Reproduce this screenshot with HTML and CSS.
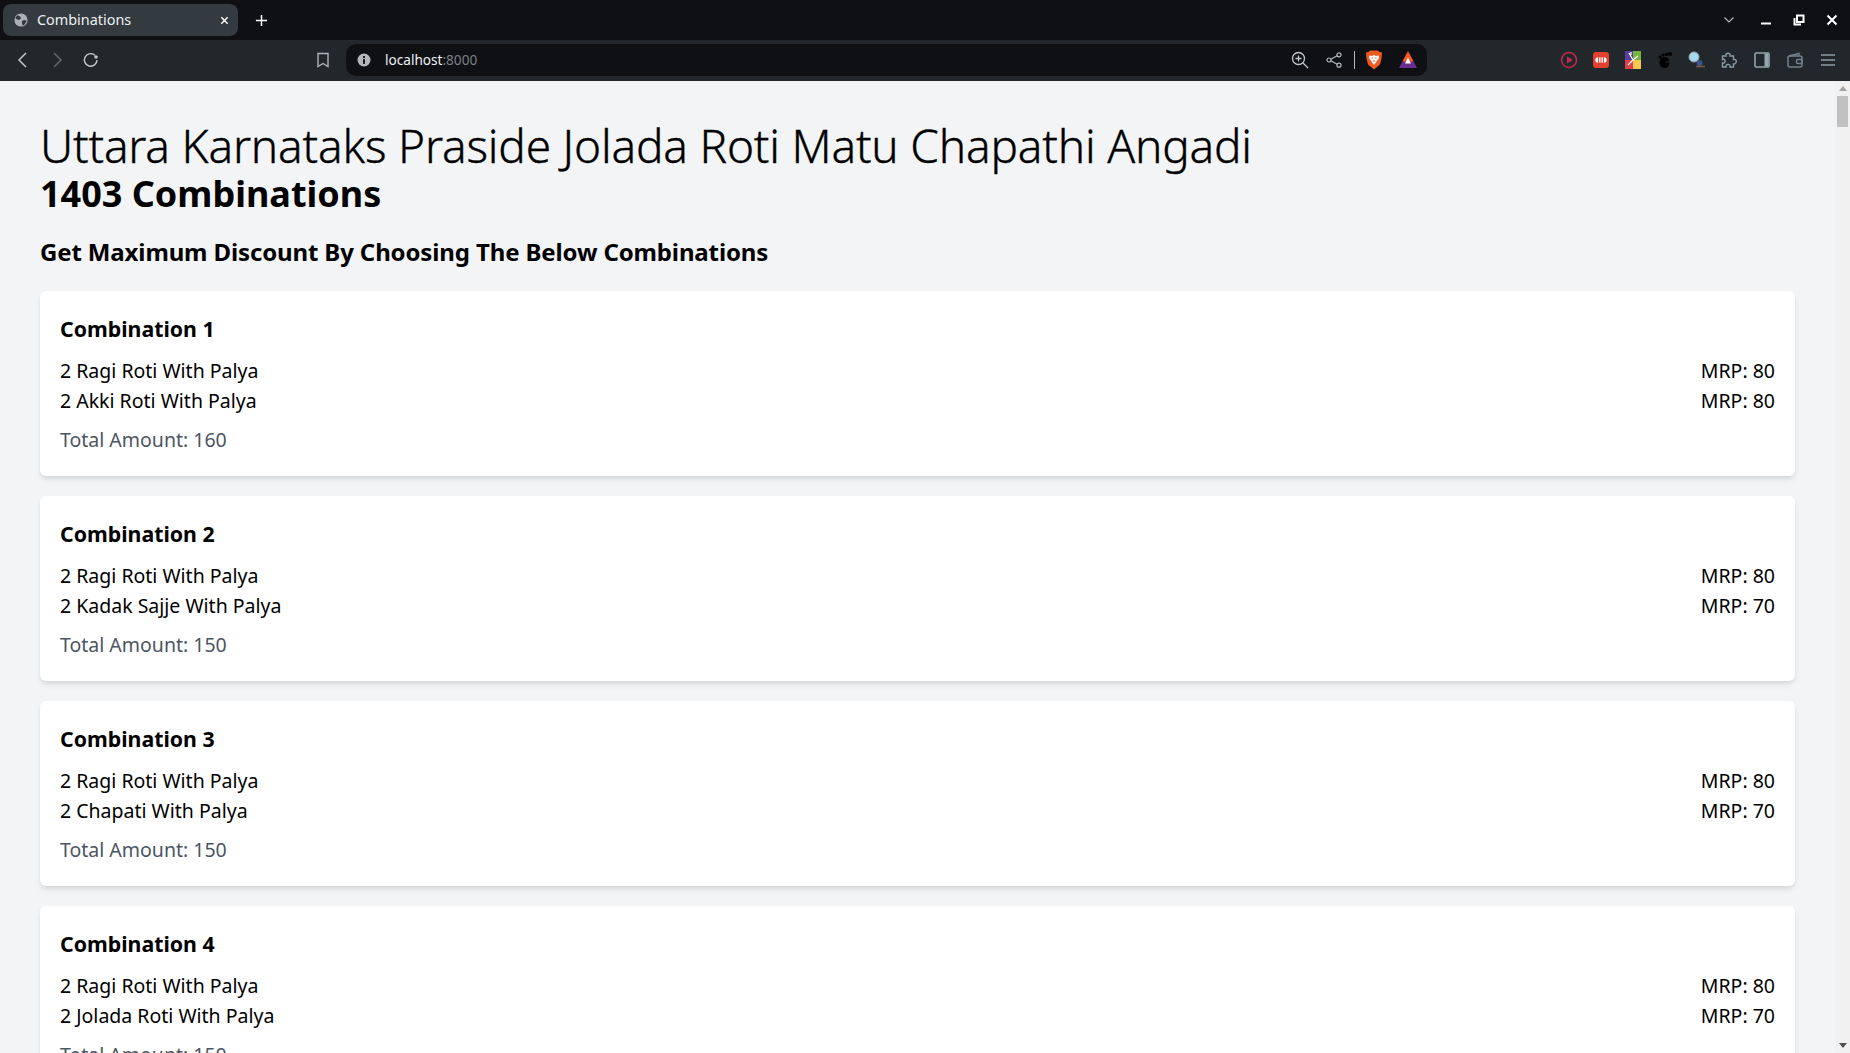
FILE: index.html
```html
<!DOCTYPE html>
<html lang="en">
<head>
<meta charset="utf-8">
<title>Combinations</title>
<link rel="stylesheet" href="styles.css">
</head>
<body>
<div class="window">
  <header class="tabbar">
    <div class="tab">
      <svg class="ico16" viewBox="0 0 16 16"><circle cx="8" cy="8" r="7.500" fill="#aab0b5"/><path d="M4 2.500l3 1.500 1 2-2 2-3-1-1.500-2zM9 9l3-1 2.500 1-2.500 4-2 1.500-1-3z" fill="#333a40"/></svg>
      <span class="tab-title">Combinations</span>
      <svg class="ico10" viewBox="0 0 10 10"><path d="M1.500 1.500l7 7M8.500 1.500l-7 7" stroke="#fff" stroke-width="1.600"/></svg>
    </div>
    <svg class="newtab" viewBox="0 0 14 14"><path d="M7 1v12M1 7h12" stroke="#fff" stroke-width="1.600"/></svg>
    <div class="spacer"></div>
    <svg class="winbtn winchev" viewBox="0 0 12 12"><path d="M1.500 3.500L6 8l4.500-4.500" fill="none" stroke="#aeb4b9" stroke-width="1.200"/></svg>
    <svg class="winbtn" viewBox="0 0 12 12"><path d="M1 9.500h10" stroke="#fff" stroke-width="2"/></svg>
    <svg class="winbtn" viewBox="0 0 12 12"><path d="M4 1.500h6.500V8H4zM1.500 4v6.500H8" fill="none" stroke="#fff" stroke-width="2"/></svg>
    <svg class="winbtn" viewBox="0 0 12 12"><path d="M1.500 1.500l9 9M10.500 1.500l-9 9" stroke="#fff" stroke-width="2"/></svg>
  </header>
  <nav class="toolbar">
    <svg class="navbtn" viewBox="0 0 18 18"><path d="M12 2L5 9l7 7" fill="none" stroke="#c4c8cb" stroke-width="1.500"/></svg>
    <svg class="navbtn" viewBox="0 0 18 18"><path d="M6 2l7 7-7 7" fill="none" stroke="#62676b" stroke-width="1.500"/></svg>
    <svg class="navbtn" viewBox="0 0 18 18"><path d="M15 9a6.300 6.300 0 1 1-2-4.700" fill="none" stroke="#c4c8cb" stroke-width="1.400"/><circle cx="14" cy="6" r="1.800" fill="#c4c8cb"/></svg>
    <svg class="bookmark" viewBox="0 0 14 16"><path d="M2 1.500h10v13l-5-3-5 3z" fill="none" stroke="#aeb4b9" stroke-width="1.400"/></svg>
    <div class="urlbar">
      <svg class="ico14" viewBox="0 0 14 14"><circle cx="7" cy="7" r="6.500" fill="#b3b8bc"/><path d="M7 3v2M7 6v5" stroke="#0e1014" stroke-width="1.800"/></svg>
      <span class="url">localhost<span class="url-port">:8000</span></span>
      <span class="spacer"></span>
      <svg class="urlicon" viewBox="0 0 18 18"><circle cx="7.500" cy="7.500" r="6" fill="none" stroke="#c4c8cb" stroke-width="1.300"/><path d="M12 12l5 5M7.500 4.500v6M4.500 7.500h6" stroke="#c4c8cb" stroke-width="1.300"/></svg>
      <svg class="urlicon" viewBox="0 0 18 18"><path d="M13.500 4L4.500 9l9 5" fill="none" stroke="#b3b8bc" stroke-width="1.200"/><circle cx="14" cy="3.800" r="2" fill="#0e1014" stroke="#b3b8bc" stroke-width="1.200"/><circle cx="4" cy="9" r="2" fill="#0e1014" stroke="#b3b8bc" stroke-width="1.200"/><circle cx="14" cy="14.200" r="2" fill="#0e1014" stroke="#b3b8bc" stroke-width="1.200"/></svg>
      <span class="urlsep"></span>
      <svg class="urlicon brave" viewBox="0 0 18 20"><path d="M5 .5h8l1.500 1.500L17 2.500l-.5 6-1.500 6-6 5-6-5-1.500-6-.5-6L3.500 2z" fill="#f15a1f"/><path d="M4.500 5.500l2.500.5L9 5l2 1 2.500-.5.500 2.500-2.500 3.500-2 3h-1l-2-3L4 8z" fill="#fff"/><path d="M6.500 8h1.500M10 8h1.500M8 11h2" stroke="#f15a1f"/></svg>
      <svg class="urlicon" viewBox="0 0 18 18"><path d="M9 0l9 17H0z" fill="#6a2c8e"/><path d="M9 0l5.500 10.500h-11z" fill="#f15a1f"/><path d="M9 6.500l3 6H6z" fill="#fff"/></svg>
    </div>
    <div class="spacer"></div>
    <div class="exts">
      <svg class="ext" viewBox="0 0 18 18"><circle cx="9" cy="9" r="7.500" fill="none" stroke="#c8264f" stroke-width="1.500"/><path d="M7 5.500l6 3.500-6 3.500z" fill="#c8264f"/></svg>
      <svg class="ext" viewBox="0 0 18 18"><rect x="1" y="1" width="16" height="16" rx="3" fill="#e4402f"/><rect x="3.500" y="6.500" width="11" height="5" rx="1.500" fill="#fff"/><path d="M6.500 6.500v5M9 6.500v5M11.500 6.500v5" stroke="#e4402f"/></svg>
      <svg class="ext" viewBox="0 0 18 18"><rect x="1" y="0" width="8" height="9" fill="#5b3f9e"/><rect x="9" y="0" width="8" height="9" fill="#74b63e"/><rect x="1" y="9" width="8" height="9" fill="#e2404a"/><rect x="9" y="9" width="8" height="9" fill="#f5c950"/><path d="M9 9L5 2M9 9l5-4M9 9l-5 5M7 4V1" stroke="#fff" stroke-width="1.200"/></svg>
      <svg class="ext" viewBox="0 0 18 18"><ellipse cx="8.500" cy="11.500" rx="5" ry="5.500" fill="#000"/><circle cx="4" cy="6" r="1.500" fill="#000"/><circle cx="7" cy="4" r="1.500" fill="#000"/><circle cx="10.500" cy="3.500" r="1.700" fill="#000"/><circle cx="14" cy="3" r="2" fill="#000"/><path d="M10 11h5" stroke="#22272b" stroke-width="1.500"/></svg>
      <svg class="ext" viewBox="0 0 18 18"><circle cx="6" cy="6" r="5" fill="#a9d8ee" stroke="#8fa2ae"/><circle cx="11.500" cy="12" r="3" fill="#3d5488"/><path d="M8 15.500h9" stroke="#7a5a48" stroke-width="1.500"/></svg>
      <svg class="ext" viewBox="0 0 18 18"><path d="M7 2.500c2-1 3.500.5 3 2.500h3.500v3.500c2-.5 3.500 1 2.500 3s-2.500 1.500-2.500 1.500V16H10c.5-2-1-3-2.500-2.500S5.500 15 6 16H2.500v-4c2 .5 3-1 2.500-2.500S3 8 2.500 8.500V5H6c-.5-1 0-2 1-2.500z" fill="none" stroke="#8a9aa3" stroke-width="1.400"/></svg>
      <svg class="ext" viewBox="0 0 18 18"><rect x="2" y="2" width="14" height="14" rx="1" fill="none" stroke="#95a6b0" stroke-width="1.500"/><rect x="11.500" y="2.500" width="4" height="13" fill="#95a6b0"/></svg>
      <svg class="ext" viewBox="0 0 18 18"><path d="M3 5l10-2.500V5" fill="none" stroke="#72828b" stroke-width="1.400"/><rect x="2" y="5" width="14" height="11" rx="2" fill="none" stroke="#72828b" stroke-width="1.500"/><rect x="10.500" y="8.500" width="5.500" height="4" rx="1" fill="none" stroke="#72828b" stroke-width="1.400"/></svg>
      <svg class="ext" viewBox="0 0 18 18"><path d="M2 4h14M2 9h14M2 14h14" stroke="#8a9aa3" stroke-width="1.500"/></svg>
    </div>
  </nav>
  <div class="viewport">
    <main class="page">
      <h1 class="title">Uttara Karnataks Praside Jolada Roti Matu Chapathi Angadi</h1>
      <p class="count">1403 Combinations</p>
      <h2 class="subtitle">Get Maximum Discount By Choosing The Below Combinations</h2>

      <section class="card">
        <h3 class="card-title">Combination 1</h3>
        <div class="row"><span>2 Ragi Roti With Palya</span><span>MRP: 80</span></div>
        <div class="row"><span>2 Akki Roti With Palya</span><span>MRP: 80</span></div>
        <p class="total">Total Amount: 160</p>
      </section>
      <section class="card">
        <h3 class="card-title">Combination 2</h3>
        <div class="row"><span>2 Ragi Roti With Palya</span><span>MRP: 80</span></div>
        <div class="row"><span>2 Kadak Sajje With Palya</span><span>MRP: 70</span></div>
        <p class="total">Total Amount: 150</p>
      </section>
      <section class="card">
        <h3 class="card-title">Combination 3</h3>
        <div class="row"><span>2 Ragi Roti With Palya</span><span>MRP: 80</span></div>
        <div class="row"><span>2 Chapati With Palya</span><span>MRP: 70</span></div>
        <p class="total">Total Amount: 150</p>
      </section>
      <section class="card">
        <h3 class="card-title">Combination 4</h3>
        <div class="row"><span>2 Ragi Roti With Palya</span><span>MRP: 80</span></div>
        <div class="row"><span>2 Jolada Roti With Palya</span><span>MRP: 70</span></div>
        <p class="total">Total Amount: 150</p>
      </section>
    </main>
    <aside class="scrollbar">
      <span class="arrow-up"></span>
      <span class="thumb"></span>
      <span class="spacer"></span>
      <span class="arrow-down"></span>
    </aside>
  </div>
</div>
</body>
</html>
```

FILE: styles.css
```css
* { box-sizing: border-box; }
html, body { margin: 0; height: 100%; overflow: hidden; }
body { font-family: "Noto Sans", "Open Sans", sans-serif; color: #000; background: #f3f4f6; }
.window { display: flex; flex-direction: column; height: 100%; }
.spacer { flex: 1; }

.tabbar { flex: 0 0 40px; background: #0e1014; display: flex; align-items: center; padding: 0 12px 0 3px; }
.tab { width: 235px; height: 32px; background: #333a40; border-radius: 8px; display: flex; align-items: center; padding: 0 8px 0 11px; color: #eef0f1; }
.tab-title { flex: 1; margin-left: 9px; padding-bottom: 1px; font-size: 14.4px; }
.ico16 { width: 14px; height: 14px; }
.ico10 { width: 9px; height: 9px; margin-right: 1px; }
.newtab { width: 13px; height: 13px; margin-left: 17px; }
.winbtn { width: 12px; height: 12px; margin-left: 21px; }
.winchev { margin-right: 4px; }

.toolbar { flex: 0 0 41px; background: #22272b; display: flex; align-items: center; padding: 0 0 1px 14px; }
.navbtn { width: 18px; height: 18px; margin-right: 16px; }
.bookmark { width: 14px; height: 16px; margin-left: 200px; }
.urlbar { width: 1081px; height: 32px; margin-left: 16px; background: #0e1014; border-radius: 10px; display: flex; align-items: center; padding: 0 10px 0 11px; }
.ico14 { width: 14px; height: 14px; }
.url { margin-left: 14px; padding-bottom: 1px; font-size: 13.6px; color: #f0f1f2; }
.url-port { color: #7b8085; }
.urlicon { width: 18px; height: 18px; margin-left: 16px; }
.urlsep { width: 1px; height: 18px; background: #b3b8bc; margin-left: 11px; margin-right: -6px; }
.brave { height: 20px; }
.exts { display: flex; gap: 14px; padding-right: 13px; }
.ext { width: 18px; height: 18px; }
.ext:nth-last-child(-n+3) { margin-left: 1px; }

.viewport { flex: 1; min-height: 0; display: flex; }
.page { flex: 1; min-width: 0; overflow: hidden; padding: 40px 40px 0; background: #f3f4f6; }
.title { margin: 0; font-size: 46px; line-height: 48px; font-weight: 300; letter-spacing: -.2px; -webkit-text-stroke: .35px #000; }
.count { margin: 5px 0 0; font-size: 36px; line-height: 40px; font-weight: 700; }
.subtitle { margin: 22px 0 23px; font-size: 24px; line-height: 32px; font-weight: 700; letter-spacing: -.13px; }
.card { background: #fff; border-radius: 6px; padding: 20px; margin-bottom: 20px; box-shadow: 0 4px 6px -1px rgba(0,0,0,.1), 0 2px 4px -1px rgba(0,0,0,.06); }
.card-title { margin: 4px 0 13px; font-size: 21.3px; line-height: 28px; font-weight: 700; }
.row { display: flex; justify-content: space-between; font-size: 19.5px; line-height: 30px; }
.total { margin: 8px 0 0; font-size: 19.5px; line-height: 32px; color: #4b5563; }

.scrollbar { flex: 0 0 15px; background: #f1f1f1; display: flex; flex-direction: column; align-items: center; padding: 5px 0; }
.arrow-up { width: 0; height: 0; border: 4px solid transparent; border-top: 0; border-bottom: 5px solid #a3a3a3; }
.arrow-down { width: 0; height: 0; border: 4px solid transparent; border-bottom: 0; border-top: 5px solid #505050; }
.thumb { width: 11px; height: 31px; margin-top: 5px; background: #c1c1c1; }
```
